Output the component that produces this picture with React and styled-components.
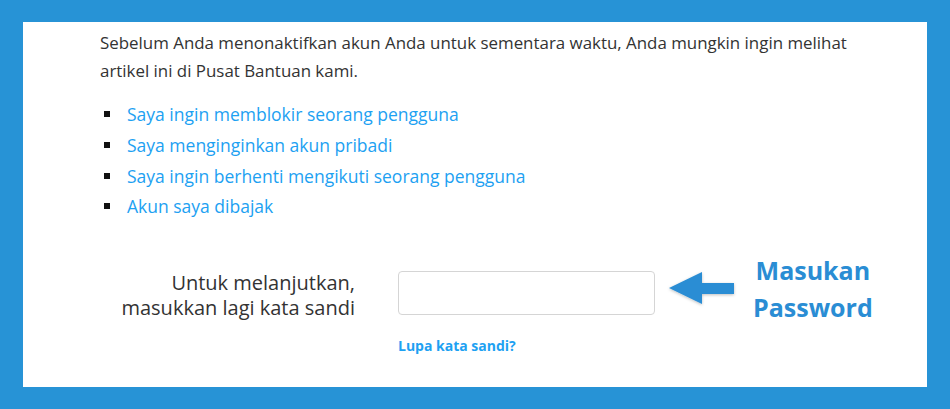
import React from 'react'
import styled, { createGlobalStyle } from 'styled-components'

const GlobalStyle = createGlobalStyle`
  html, body {
    margin: 0;
    padding: 0;
    background: #2793d6;
  }
  * { box-sizing: border-box; }
`

const Frame = styled.div`
  width: 950px;
  height: 409px;
  padding: 22px 23px;
  background: #2793d6;
`

const Panel = styled.main`
  height: 100%;
  background: #fff;
  padding: 7px 0 0 77px;
  font-family: "Open Sans", "Noto Sans", sans-serif;
  color: #333;
`

const Intro = styled.p`
  margin: 0;
  font-size: 16.9px;
  line-height: 28px;
  white-space: nowrap;
`

const Links = styled.ul`
  list-style: none;
  margin: 14px 0 0;
  padding: 0;
`

const Item = styled.li`
  display: flex;
  align-items: center;
  height: 30.7px;
  font-size: 17.5px;

  &::before {
    content: '';
    width: 6px;
    height: 6px;
    margin: 0 17px 0 4px;
    background: #111;
  }

  a {
    color: #1da1f2;
    text-decoration: none;
  }
`

const FormRow = styled.div`
  display: flex;
  align-items: flex-start;
  margin-top: 49px;
`

const Label = styled.label`
  width: 255px;
  text-align: right;
  font-size: 20px;
  line-height: 25px;
  color: #333;
  margin-top: -1px;
  white-space: nowrap;
`

const Field = styled.div`
  display: flex;
  flex-direction: column;
  margin-left: 43px;
`

const Input = styled.input`
  width: 257px;
  height: 44px;
  border: 1px solid #d5d5d5;
  border-radius: 4px;
  outline: none;
`

const Forgot = styled.a`
  margin-top: 21px;
  font-size: 14px;
  font-weight: 700;
  color: #1da1f2;
  text-decoration: none;
`

const Callout = styled.div`
  display: flex;
  align-items: center;
  margin-left: 12px;
  margin-top: -19px;
`

const Hint = styled.div`
  margin-left: 14px;
  text-align: center;
  font-size: 25px;
  line-height: 37px;
  font-weight: 700;
  color: #2a8dd4;
`

const ArrowBox = styled.div`
  display: flex;
  margin-top: 0;
`

function Arrow() {
  return (
    <svg width="72" height="40" viewBox="0 0 72 40">
      <defs>
        <filter id="sh" x="-20%" y="-30%" width="140%" height="160%">
          <feDropShadow dx="0" dy="1" stdDeviation="1.5" floodColor="#000" floodOpacity="0.25" />
        </filter>
      </defs>
      <polygon
        points="2,19 35,3 35,14 67,14 67,25 35,25 35,35"
        fill="#2a8dd4"
        filter="url(#sh)"
      />
    </svg>
  )
}

const links = [
  'Saya ingin memblokir seorang pengguna',
  'Saya menginginkan akun pribadi',
  'Saya ingin berhenti mengikuti seorang pengguna',
  'Akun saya dibajak',
]

export default function App() {
  return (
    <>
      <GlobalStyle />
      <Frame>
        <Panel>
          <Intro>
            Sebelum Anda menonaktifkan akun Anda untuk sementara waktu, Anda mungkin ingin melihat
            <br />
            artikel ini di Pusat Bantuan kami.
          </Intro>
          <Links>
            {links.map((l) => (
              <Item key={l}>
                <a href="#">{l}</a>
              </Item>
            ))}
          </Links>
          <FormRow>
            <Label htmlFor="pw">
              Untuk melanjutkan,
              <br />
              masukkan lagi kata sandi
            </Label>
            <Field>
              <Input id="pw" type="password" />
              <Forgot href="#">Lupa kata sandi?</Forgot>
            </Field>
            <Callout>
              <ArrowBox>
                <Arrow />
              </ArrowBox>
              <Hint>
                Masukan
                <br />
                Password
              </Hint>
            </Callout>
          </FormRow>
        </Panel>
      </Frame>
    </>
  )
}
